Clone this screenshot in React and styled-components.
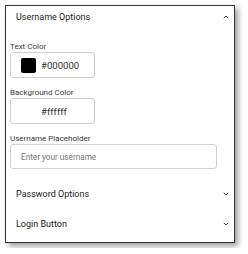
import styled, { createGlobalStyle } from 'styled-components';

const Global = createGlobalStyle`
  body {
    margin: 0;
    padding: 5px;
    background: #ffffff;
    font-family: Roboto, "Liberation Sans", Arial, sans-serif;
  }
`;

const Panel = styled.div`
  width: 230px;
  box-sizing: border-box;
  border: 1px solid #333;
  background: #fff;
  box-shadow: 3px 3px 6px rgba(0, 0, 0, 0.4);
  padding-bottom: 3px;
`;

const Header = styled.div`
  display: flex;
  align-items: center;
  justify-content: space-between;
  height: ${(p) => (p.$open ? 21 : 30)}px;
  padding: ${(p) => (p.$open ? '0 0 1px' : '0')} 10px;
  padding-right: 5px;
  font-size: 9px;
  color: #222;
`;

const Content = styled.div`
  display: flex;
  flex-direction: column;
  gap: 10px;
  padding: 14px 4px 10px;
`;

const Field = styled.div`
  display: flex;
  flex-direction: column;
`;

const Label = styled.label`
  font-size: 8px;
  line-height: 10px;
  color: #3a3a3a;
`;

const ColorBox = styled.div`
  width: 85px;
  height: 26px;
  box-sizing: border-box;
  border: 1px solid #d0d0d0;
  border-radius: 3px;
  display: flex;
  align-items: center;
  gap: 5px;
  padding-left: 10px;
  font-size: 9.6px;
  color: #333;
`;

const Swatch = styled.span`
  width: 15px;
  height: 15px;
  border-radius: 2px;
  background: ${(p) => p.$color};
`;

const TextInput = styled.input`
  width: 207px;
  height: 25px;
  box-sizing: border-box;
  border: 1px solid #d0d0d0;
  border-radius: 3px;
  padding: 0 0 0 10px;
  font-family: inherit;
  font-size: 8.2px;
  color: #333;
  outline: none;
  &::placeholder {
    color: #757575;
  }
`;

const Chevron = ({ up }) => (
  <svg width="6" height="4" viewBox="0 0 6 4">
    <polyline
      points={up ? '0.8,3.2 3,1 5.2,3.2' : '0.8,0.8 3,3 5.2,0.8'}
      fill="none"
      stroke="#444"
      strokeWidth="1"
    />
  </svg>
);

export default function App() {
  return (
    <>
      <Global />
      <Panel>
        <Header $open>
          <span>Username Options</span>
          <Chevron up />
        </Header>
        <Content>
          <Field>
            <Label>Text Color</Label>
            <ColorBox>
              <Swatch $color="#000000" />
              #000000
            </ColorBox>
          </Field>
          <Field>
            <Label>Background Color</Label>
            <ColorBox>
              <Swatch $color="#ffffff" />
              #ffffff
            </ColorBox>
          </Field>
          <Field>
            <Label>Username Placeholder</Label>
            <TextInput placeholder="Enter your username" />
          </Field>
        </Content>
        <Header>
          <span>Password Options</span>
          <Chevron />
        </Header>
        <Header>
          <span>Login Button</span>
          <Chevron />
        </Header>
      </Panel>
    </>
  );
}
